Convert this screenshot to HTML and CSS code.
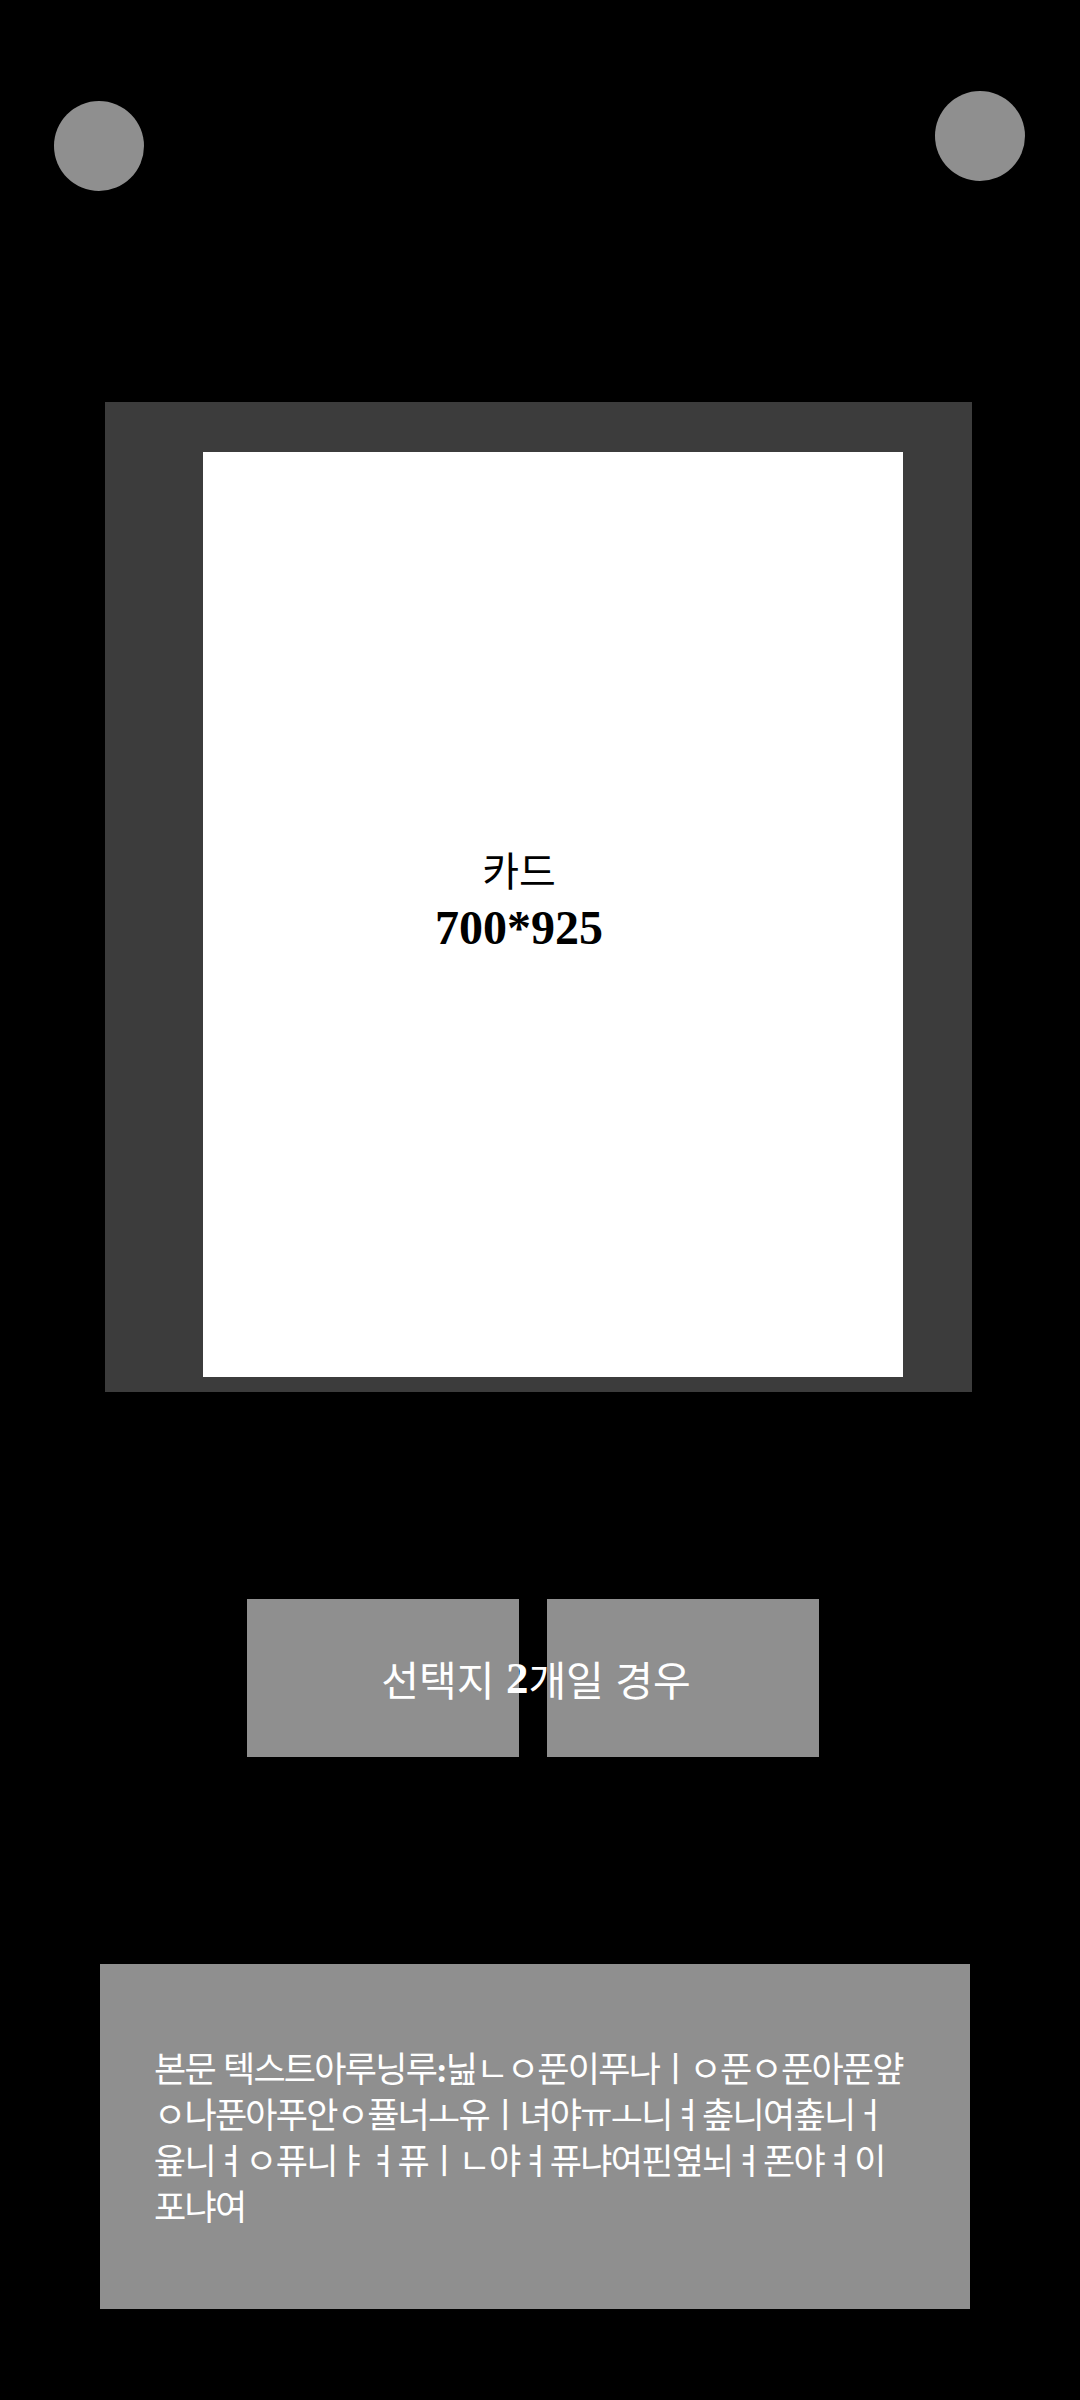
FILE: index.html
```html
<!DOCTYPE html>
<html lang="ko">
<head>
<meta charset="utf-8">
<title>카드</title>
<link rel="stylesheet" href="styles.css">
</head>
<body>
<div class="screen">
  <header class="top">
    <div class="dot dot-left"></div>
    <div class="dot dot-right"></div>
  </header>

  <section class="panel">
    <div class="card">
      <div class="card-label">
        <div class="card-title">카드</div>
        <div class="card-size">700*925</div>
      </div>
    </div>
  </section>

  <section class="choices">
    <div class="choice"></div>
    <div class="choice"></div>
    <div class="choices-label">선택지 <span class="latin">2</span>개일 경우</div>
  </section>

  <section class="body-box">
    <p class="body-text">본문 텍스트아루닝루<span class="latin">:</span>닖ㄴㅇ푼이푸나ㅣㅇ푼ㅇ푼아푼얖<br>ㅇ나푼아푸안ㅇ퓰너ㅗ유ㅣ녀야ㅠㅗ니ㅕ촢니여춒니ㅓ<br>윺니ㅕㅇ퓨니ㅑㅕ퓨ㅣㄴ야ㅕ퓨냐여핀옆뇌ㅕ폰야ㅕ이<br>포냐여</p>
  </section>
</div>
</body>
</html>
```

FILE: styles.css
```css
html, body {
  margin: 0;
  padding: 0;
  background: #000;
}

.screen {
  width: 1080px;
  height: 2400px;
  background: #000;
  overflow: hidden;
  font-family: "Noto Sans CJK KR", "Noto Sans", sans-serif;
}

.latin {
  font-family: "Liberation Serif", "DejaVu Serif", serif;
  font-weight: 700;
  line-height: 0;
}

.top {
  display: flex;
  justify-content: space-between;
  align-items: flex-start;
  padding: 91px 55px 0 54px;
}

.dot {
  width: 90px;
  height: 90px;
  border-radius: 50%;
  background: #8f8f8f;
}

.dot-left {
  margin-top: 10px;
}

.panel {
  box-sizing: border-box;
  width: 867px;
  height: 990px;
  margin: 211px 0 0 105px;
  padding: 50px 0 0 98px;
  background: #3c3c3c;
}

.card {
  box-sizing: border-box;
  width: 700px;
  height: 925px;
  background: #fff;
  display: flex;
  align-items: center;
  justify-content: center;
  padding: 0 68px 29px 0;
}

.card-label {
  text-align: center;
  color: #000;
}

.card-title {
  font-size: 40px;
  line-height: 56px;
}

.card-size {
  font-family: "Liberation Serif", "DejaVu Serif", serif;
  font-weight: 700;
  font-size: 48px;
  line-height: 62px;
}

.choices {
  position: relative;
  display: flex;
  gap: 28px;
  margin: 207px 0 0 247px;
  width: 572px;
}

.choice {
  width: 272px;
  height: 158px;
  background: #8f8f8f;
}

.choices-label {
  position: absolute;
  left: 0;
  right: -6px;
  top: 0;
  bottom: 0;
  display: flex;
  align-items: center;
  justify-content: center;
  color: #fff;
  font-size: 41px;
  white-space: pre;
}

.choices-label .latin {
  font-size: 45px;
}

.body-box {
  box-sizing: border-box;
  width: 870px;
  height: 345px;
  margin: 207px 0 0 100px;
  padding: 80px 40px 0 54px;
  background: #8f8f8f;
}

.body-text {
  margin: 0;
  color: #fff;
  font-size: 35px;
  letter-spacing: -1.75px;
  line-height: 46px;
  white-space: nowrap;
}
```
